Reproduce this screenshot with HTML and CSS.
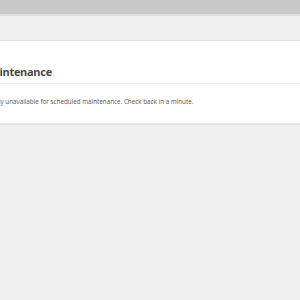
FILE: index.html
```html
<!DOCTYPE html>
<html lang="en">
<head>
<meta charset="UTF-8">
<meta name="viewport" content="width=device-width, initial-scale=1.0">
<title>Maintenance</title>
<link rel="stylesheet" href="styles.css">
</head>
<body>
<div class="topbar"></div>
<div class="subbar"></div>
<div class="card">
  <h1 class="card-title">Maintenance</h1>
  <p class="card-text">Briefly unavailable for scheduled maintenance. Check back in a minute.</p>
</div>
</body>
</html>
```

FILE: styles.css
```css
/* page */
body {
  margin: 0;
  background-color: #f0f0f0;
  font-family: "Open Sans", Arial, sans-serif;
  overflow: hidden;
}

.topbar {
  height: 14px;
  background-color: #c8c8c8;
  border-bottom: 2px solid #e0e0e0;
}

.subbar {
  height: 24px;
  background-color: #f0f0f0;
  border-bottom: 1px solid #dedede;
}

.card {
  margin-left: -18px;
  width: 400px;
  background-color: #fff;
  border-bottom: 2px solid #e2e2e2;
}

.card-title {
  margin: 0;
  padding: 24px 0 4px 1px;
  height: 14px;
  line-height: 14px;
  font-size: 11px;
  font-weight: 700;
  letter-spacing: -0.3px;
  color: #4a4a4a;
  border-bottom: 1px solid #ececec;
}

.card-text {
  margin: 0;
  padding: 13px 0 0 3px;
  height: 26px;
  line-height: 10px;
  font-size: 6.3px;
  color: #555;
}
```
